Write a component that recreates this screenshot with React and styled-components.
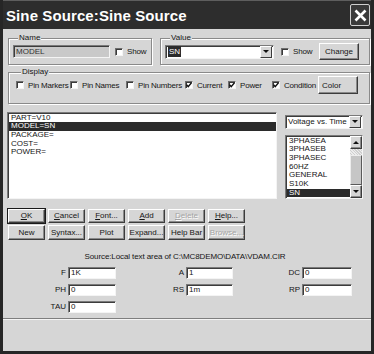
import React from 'react';
import styled, { createGlobalStyle } from 'styled-components';

const FACE = '#d6d6d6';
const SELECT = '#2b2b2b';

const GlobalStyle = createGlobalStyle`
  html, body {
    margin: 0;
    padding: 0;
    background: ${FACE};
  }
  * {
    box-sizing: border-box;
  }
`;

const Window = styled.div`
  width: 374px;
  height: 354px;
  display: flex;
  flex-direction: column;
  background: ${FACE};
  border: 3px solid #262626;
  border-top: none;
  font-family: "Liberation Sans", Arial, sans-serif;
  font-size: 8px;
  color: #151515;
  overflow: hidden;
`;

const TitleBar = styled.div`
  flex: none;
  height: 29px;
  display: flex;
  align-items: center;
  justify-content: space-between;
  background: #2d2d2d;
  border-top: 1px solid #5e5e5e;
  padding: 0 1px 0 3px;
`;

const Title = styled.span`
  color: #fff;
  font-size: 15px;
  font-weight: bold;
  letter-spacing: 0.1px;
`;

const CloseBtn = styled.div`
  width: 20px;
  height: 22px;
  border: 1px solid #cfcfcf;
  border-radius: 2px;
  background: #3a3a3a;
  display: flex;
  align-items: center;
  justify-content: center;
`;

const Body = styled.div`
  flex: 1;
  display: flex;
  flex-direction: column;
  padding: 0 1px 0 5px;
`;

const TopRow = styled.div`
  display: flex;
  gap: 8px;
  margin-top: 5px;
`;

const Group = styled.fieldset`
  margin: ${p => p.$mt || 0}px 0 0 0;
  min-width: 0;
  width: ${p => (p.$w ? `${p.$w}px` : 'auto')};
  flex: ${p => (p.$w ? 'none' : '1')};
  padding: ${p => p.$pad};
  border: 1px solid #8a8a8a;
  box-shadow: inset 1px 1px 0 #fff, 1px 1px 0 #fff;
`;

const Legend = styled.legend`
  margin-left: 5px;
  padding: 0 1px;
  font-size: 8px;
  line-height: 8px;
  background: ${FACE};
`;

const Row = styled.div`
  display: flex;
  align-items: center;
  height: ${p => p.$h}px;
`;

const TextBox = styled.div`
  width: ${p => (p.$w ? `${p.$w}px` : '100%')};
  height: ${p => p.$h || 13}px;
  flex: none;
  display: flex;
  align-items: center;
  padding-left: 2px;
  background: ${p => (p.$disabled ? '#c9c9c9' : '#fff')};
  color: ${p => (p.$disabled ? '#333' : '#151515')};
  border: 1px solid;
  border-color: #7a7a7a #f4f4f4 #f4f4f4 #7a7a7a;
  box-shadow: inset 1px 1px 0 #3c3c3c;
  white-space: nowrap;
  overflow: hidden;
`;

const Combo = styled(TextBox)`
  padding-right: 1px;
  justify-content: space-between;
`;

const Selected = styled.span`
  background: ${SELECT};
  color: #fff;
  padding: 1px 1px;
`;

const ArrowBtn = styled.span`
  width: 12px;
  height: 100%;
  display: flex;
  align-items: center;
  justify-content: center;
  background: ${FACE};
  border: 1px solid;
  border-color: #fff #3c3c3c #3c3c3c #fff;

  &::after {
    content: '';
    border-left: 3px solid transparent;
    border-right: 3px solid transparent;
    border-${p => (p.$up ? 'bottom' : 'top')}: 3px solid #111;
  }
`;

const CheckItem = styled.label`
  display: flex;
  align-items: center;
  gap: 4px;
  flex: none;
  width: ${p => (p.$w ? `${p.$w}px` : 'auto')};
  margin-left: ${p => p.$ml || 0}px;
  white-space: nowrap;
  letter-spacing: -0.2px;
`;

const Box = styled.span`
  width: 8px;
  height: 8px;
  flex: none;
  display: flex;
  align-items: center;
  justify-content: center;
  background: #fff;
  border: 1px solid;
  border-color: #6e6e6e #f4f4f4 #f4f4f4 #6e6e6e;
  box-shadow: inset 1px 1px 0 #3a3a3a;
`;

const Btn = styled.button`
  width: ${p => (p.$w ? `${p.$w}px` : 'auto')};
  height: ${p => p.$h || 15}px;
  flex: none;
  padding: 0;
  margin-left: ${p => (p.$push ? 'auto' : '0')};
  font-family: inherit;
  font-size: 8px;
  text-align: ${p => (p.$left ? 'left' : 'center')};
  padding-left: ${p => (p.$left ? '3px' : '0')};
  color: ${p => (p.disabled ? '#a4a4a4' : '#151515')};
  text-shadow: ${p => (p.disabled ? '1px 1px 0 #fff' : 'none')};
  background: ${FACE};
  border: 1px solid;
  border-color: #fff #3c3c3c #3c3c3c #fff;
  box-shadow: inset -1px -1px 0 #8a8a8a${p => (p.$default ? ', 0 0 0 1px #1a1a1a' : '')};
`;

const ListRow = styled.div`
  display: flex;
  gap: 8px;
  margin: 8px 0 0 -1px;
  height: 87px;
`;

const ListBox = styled.div`
  width: ${p => p.$w}px;
  height: ${p => p.$h}px;
  display: flex;
  background: #fff;
  border: 1px solid;
  border-color: #7a7a7a #f4f4f4 #f4f4f4 #7a7a7a;
  box-shadow: inset 1px 1px 0 #3c3c3c;
  padding: 1px 0 1px 1px;
`;

const Items = styled.div`
  flex: 1;
  min-width: 0;
`;

const Item = styled.div`
  height: 8.7px;
  line-height: 8.7px;
  padding-left: 2px;
  white-space: nowrap;
  background: ${p => (p.$sel ? SELECT : 'transparent')};
  color: ${p => (p.$sel ? '#fff' : '#151515')};
`;

const SideCol = styled.div`
  width: 78px;
  display: flex;
  flex-direction: column;
  gap: 6px;
  padding-top: 3px;
`;

const ScrollBar = styled.div`
  width: 12px;
  margin: -1px 0;
  display: flex;
  flex-direction: column;
`;

const ScrollArrow = styled(ArrowBtn)`
  height: 13px;
  flex: none;
  box-shadow: inset -1px -1px 0 #8a8a8a;
`;

const Track = styled.div`
  height: 6px;
  background-image: repeating-linear-gradient(45deg, #ededed 0 1px, #d0d0d0 1px 2px);
`;

const Thumb = styled.div`
  flex: 1;
  background: #c6c6c6;
  border: 1px solid;
  border-color: #ededed #5a5a5a #5a5a5a #ededed;
`;

const ButtonRow = styled.div`
  display: grid;
  grid-template-columns: repeat(6, 37px);
  column-gap: 3px;
  margin-top: ${p => p.$mt}px;
`;

const SourceLine = styled.div`
  margin-top: 12px;
  height: 10px;
  line-height: 10px;
  text-align: center;
  padding-right: 8px;
  letter-spacing: -0.1px;
`;

const ParamGrid = styled.div`
  display: grid;
  grid-template-columns: 58px 48px 66px 47px 65px 50px;
  grid-auto-rows: 12px;
  column-gap: 2px;
  row-gap: 5px;
  margin-top: 5px;
`;

const ParamLabel = styled.span`
  display: flex;
  align-items: center;
  justify-content: flex-end;
`;

const Separator = styled.div`
  margin: 5px -1px 0 -5px;
  height: 2px;
  border-top: 1px solid #7e7e7e;
  border-bottom: 1px solid #f4f4f4;
`;

const StatusArea = styled.div`
  flex: 1;
`;

const Check = () => (
  <svg width="6" height="6" viewBox="0 0 6 6">
    <polyline points="0.5,2.8 2.2,4.6 5.5,0.8" fill="none" stroke="#111" strokeWidth="1.4" />
  </svg>
);

const CheckBox = ({ label, checked, w, ml }) => (
  <CheckItem $w={w} $ml={ml}>
    <Box>{checked && <Check />}</Box>
    {label}
  </CheckItem>
);

const displayOpts = [
  { label: 'Pin Markers', w: 54 },
  { label: 'Pin Names', w: 56 },
  { label: 'Pin Numbers', w: 59 },
  { label: 'Current', w: 43, checked: true },
  { label: 'Power', w: 44, checked: true },
  { label: 'Condition', w: 46, checked: true },
];

const attributes = ['PART=V10', 'MODEL=SN', 'PACKAGE=', 'COST=', 'POWER='];
const models = ['3PHASEA', '3PHASEB', '3PHASEC', '60HZ', 'GENERAL', 'S10K', 'SN'];

// two rows of command buttons, the first letter of the top row is the mnemonic
const buttonRows = [
  {
    h: 14,
    mt: 10,
    items: [
      { key: 'ok', label: <><u>O</u>K</>, isDefault: true },
      { key: 'cancel', label: <><u>C</u>ancel</> },
      { key: 'font', label: <><u>F</u>ont...</> },
      { key: 'add', label: <><u>A</u>dd</> },
      { key: 'delete', label: <><u>D</u>elete</>, disabled: true },
      { key: 'help', label: <><u>H</u>elp...</> },
    ],
  },
  {
    h: 15,
    mt: 2,
    items: [
      { key: 'new', label: 'New' },
      { key: 'syntax', label: 'Syntax...' },
      { key: 'plot', label: 'Plot' },
      { key: 'expand', label: 'Expand...' },
      { key: 'helpbar', label: 'Help Bar' },
      { key: 'browse', label: 'Browse...', disabled: true },
    ],
  },
];

const params = [
  ['F', '1K'], ['A', '1'], ['DC', '0'],
  ['PH', '0'], ['RS', '1m'], ['RP', '0'],
  ['TAU', '0'],
];

export default function App() {
  return (
    <>
      <GlobalStyle />
      <Window>
        <TitleBar>
          <Title>Sine Source:Sine Source</Title>
          <CloseBtn>
            <svg width="13" height="13" viewBox="0 0 13 13">
              <path d="M1.5 1.5 L11.5 11.5 M11.5 1.5 L1.5 11.5" stroke="#fff" strokeWidth="2.6" />
            </svg>
          </CloseBtn>
        </TitleBar>

        <Body>
          <TopRow>
            <Group $w={144} $pad="1px 4px 4px 4px">
              <Legend>Name</Legend>
              <Row $h={17}>
                <TextBox $w={97} $disabled>MODEL</TextBox>
                <CheckBox label="Show" ml={5} />
              </Row>
            </Group>
            <Group $pad="1px 10px 4px 4px">
              <Legend>Value</Legend>
              <Row $h={17}>
                <Combo $w={109} $h={14}>
                  <Selected>SN</Selected>
                  <ArrowBtn />
                </Combo>
                <CheckBox label="Show" ml={7} />
                <Btn $w={40} $h={17} $push>Change</Btn>
              </Row>
            </Group>
          </TopRow>

          <Group $mt={3} $pad="0 10px 2px 7px">
            <Legend>Display</Legend>
            <Row $h={18}>
              {displayOpts.map(o => (
                <CheckBox key={o.label} label={o.label} checked={o.checked} w={o.w} />
              ))}
              <Btn $w={40} $h={18} $left>Color</Btn>
            </Row>
          </Group>

          <ListRow>
            <ListBox $w={270} $h={87}>
              <Items>
                {attributes.map(a => (
                  <Item key={a} $sel={a === 'MODEL=SN'}>{a}</Item>
                ))}
              </Items>
            </ListBox>
            <SideCol>
              <Combo $w={78} $h={14}>
                Voltage vs. Time
                <ArrowBtn />
              </Combo>
              <ListBox $w={78} $h={65}>
                <Items>
                  {models.map(m => (
                    <Item key={m} $sel={m === 'SN'}>{m}</Item>
                  ))}
                </Items>
                <ScrollBar>
                  <ScrollArrow $up />
                  <Track />
                  <Thumb />
                  <ScrollArrow />
                </ScrollBar>
              </ListBox>
            </SideCol>
          </ListRow>

          {buttonRows.map((row, i) => (
            <ButtonRow key={i} $mt={row.mt}>
              {row.items.map(b => (
                <Btn key={b.key} $h={row.h} $default={b.isDefault} disabled={b.disabled}>
                  {b.label}
                </Btn>
              ))}
            </ButtonRow>
          ))}

          <SourceLine>Source:Local text area of C:\MC8DEMO\DATA\VDAM.CIR</SourceLine>

          <ParamGrid>
            {params.map(([name, value]) => (
              <React.Fragment key={name}>
                <ParamLabel>{name}</ParamLabel>
                <TextBox $h={12}>{value}</TextBox>
              </React.Fragment>
            ))}
          </ParamGrid>

          <Separator />
          <StatusArea />
        </Body>
      </Window>
    </>
  );
}
